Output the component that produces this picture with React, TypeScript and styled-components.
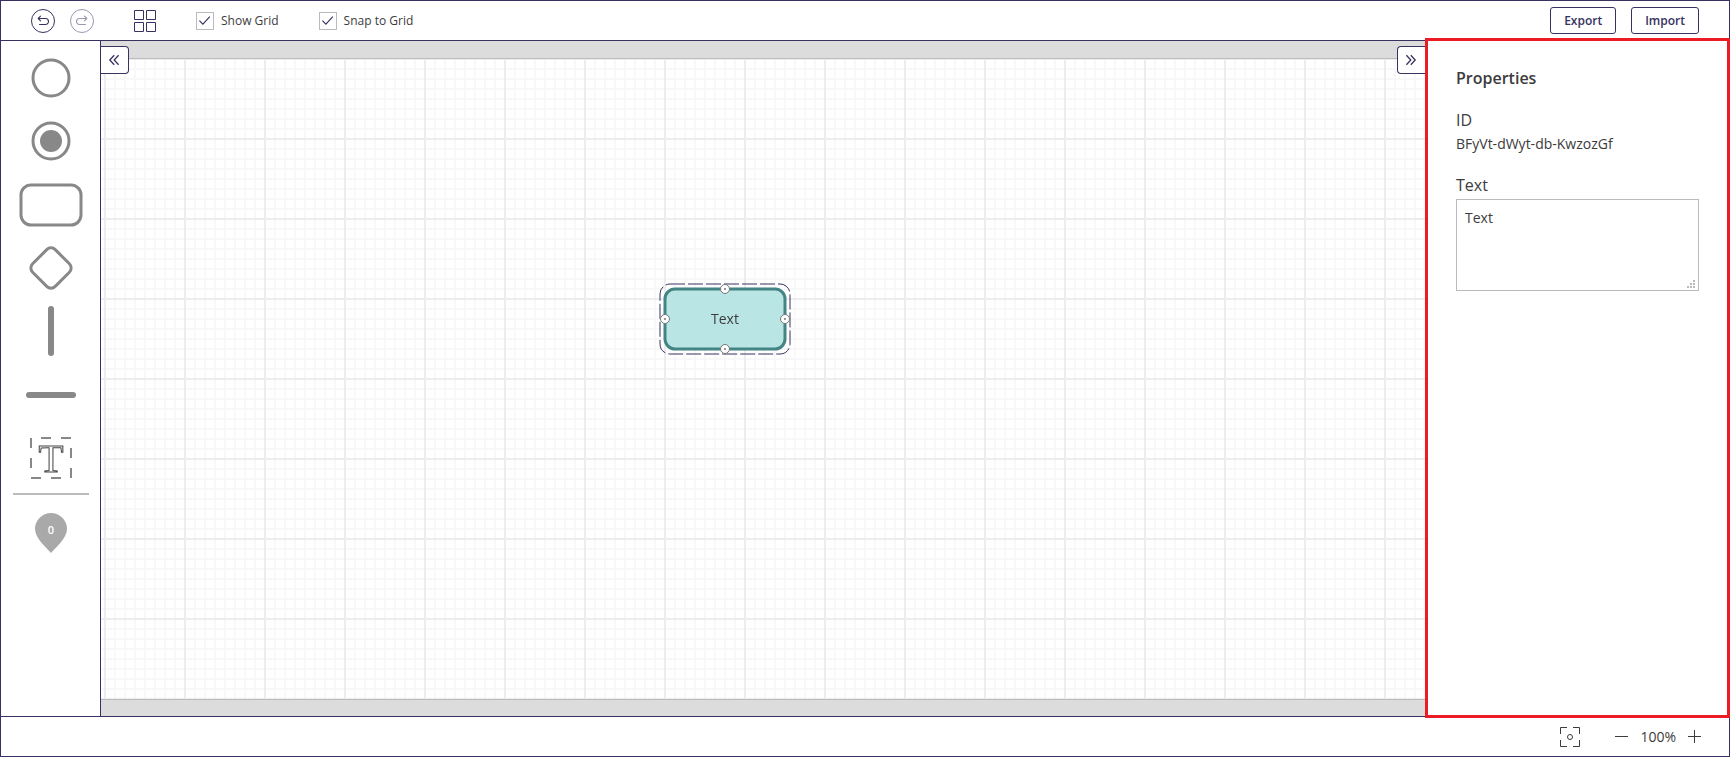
import React, { useState } from "react";
import styled, { createGlobalStyle, css } from "styled-components";

const ink = "#37325f";
const text = "#3c3c3c";
const line = "#bbbbbb";
const shape = "#888888";

const GlobalStyle = createGlobalStyle`
  *, *::before, *::after { box-sizing: border-box; }
  body {
    margin: 0;
    background: #fff;
    color: ${text};
    font-family: "Open Sans", "Noto Sans", sans-serif;
    font-size: 14px;
  }
  button, textarea { font-family: inherit; }
  svg { display: block; overflow: visible; }
`;

const Editor = styled.div`
  display: flex;
  flex-direction: column;
  min-height: 100vh;
  border: 1px solid ${ink};
`;

const Toolbar = styled.header`
  display: flex;
  align-items: center;
  gap: 40px;
  height: 40px;
  padding: 0 30px;
  border-bottom: 1px solid ${ink};
`;

const ButtonGroup = styled.div<{ $end?: boolean }>`
  display: flex;
  gap: 15px;
  ${(p) => p.$end && css`margin-left: auto;`}
`;

const IconButton = styled.button`
  display: flex;
  padding: 0;
  border: 0;
  background: none;
  color: ${ink};
  cursor: pointer;

  &:disabled {
    opacity: 0.5;
    cursor: default;
  }
`;

const ActionButton = styled.button`
  height: 27px;
  padding: 0 13px;
  border: 1px solid ${ink};
  border-radius: 3px;
  background: #fff;
  color: ${ink};
  font-size: 12px;
  font-weight: 600;
  line-height: 24px;
  cursor: pointer;
`;

const CheckLabel = styled.label`
  display: flex;
  align-items: center;
  gap: 7px;
  font-size: 12px;
  line-height: 18px;
  cursor: pointer;
`;

const CheckBox = styled.span`
  display: grid;
  width: 18px;
  height: 18px;

  > * { grid-area: 1 / 1; }
  svg { pointer-events: none; }
  input:not(:checked) + svg { visibility: hidden; }
`;

const CheckInput = styled.input`
  appearance: none;
  width: 18px;
  height: 18px;
  margin: 0;
  border: 1px solid ${line};
  background: #fff;
`;

const Workspace = styled.div`
  display: flex;
  flex: 1;
`;

const Palette = styled.aside`
  width: 100px;
  padding-top: 5px;
  border-right: 1px solid ${ink};
`;

const ShapeList = styled.div`
  display: grid;
  grid-auto-rows: 1fr;
  height: 444px;
`;

const ShapeButton = styled.button`
  display: flex;
  align-items: center;
  justify-content: center;
  width: 100%;
  padding: 0;
  border: 0;
  background: none;
  cursor: grab;
`;

const Divider = styled.hr`
  height: 2px;
  margin: 3px 11px 18px 12px;
  border: 0;
  background: ${line};
`;

const CanvasArea = styled.main`
  position: relative;
  display: flex;
  flex: 1;
  min-width: 0;
  padding: 17px 0 16px;
  background: #dcdcdc;
`;

const Page = styled.div<{ $grid: boolean }>`
  flex: 1;
  border-top: 1px solid ${line};
  border-bottom: 1px solid ${line};
  background-color: #fff;
  ${(p) =>
    p.$grid &&
    css`
      background-image:
        linear-gradient(90deg, #ededed 2px, transparent 2px),
        linear-gradient(#ededed 2px, transparent 2px),
        linear-gradient(90deg, #f8f8f8 2px, transparent 2px),
        linear-gradient(#f8f8f8 2px, transparent 2px);
      background-size: 80px 80px, 80px 80px, 10px 10px, 10px 10px;
      background-position: 3px -1px, 3px -1px, 3px -1px, 3px -1px;
    `}
`;

const PanelToggle = styled.button<{ $side: "left" | "right" }>`
  position: absolute;
  top: 5px;
  ${(p) => p.$side}: 0;
  display: flex;
  align-items: center;
  justify-content: center;
  width: 28px;
  height: 28px;
  padding: 0 1px 0 0;
  border: 1px solid ${ink};
  border-${(p) => p.$side}: 0;
  border-radius: ${(p) => (p.$side === "left" ? "0 4px 4px 0" : "4px 0 0 4px")};
  background: #fff;
  color: ${ink};
  cursor: pointer;
`;

const DiagramNode = styled.svg`
  position: absolute;
  left: 558px;
  top: 242px;
  font-size: 14px;
  will-change: transform;
`;

const Properties = styled.aside`
  position: relative;
  width: 304px;
  padding: 25px 30px 0 31px;

  &::after {
    content: "";
    position: absolute;
    inset: -3px -1px -2px 0;
    border: 3px solid #ed1c24;
    pointer-events: none;
  }
`;

const PanelTitle = styled.h2`
  margin: 0 0 18px;
  font-size: 16px;
  font-weight: 600;
  line-height: 24px;
`;

const FieldName = styled.label`
  display: block;
  font-size: 16px;
  line-height: 24px;
`;

const IdValue = styled.output`
  display: block;
  margin-bottom: 17px;
  line-height: 24px;
`;

const TextField = styled.div`
  position: relative;
  margin-top: 2px;
`;

const TextArea = styled.textarea`
  display: block;
  width: 100%;
  height: 92px;
  padding: 8px;
  border: 1px solid ${line};
  outline: 0;
  background: #fff;
  color: ${text};
  font-size: 14px;
  line-height: 20px;
  resize: none;
`;

const ResizeGrip = styled.svg`
  position: absolute;
  right: 4px;
  bottom: 3px;
  pointer-events: none;
`;

const StatusBar = styled.footer`
  display: flex;
  align-items: center;
  justify-content: flex-end;
  height: 40px;
  padding-right: 28px;
  border-top: 1px solid ${ink};
`;

const ZoomControls = styled.div`
  display: flex;
  align-items: center;
  gap: 12px;
  margin-left: 35px;
  line-height: 20px;

  button { color: ${text}; }
`;

const OutlinedLetter = styled.text`
  font-family: "Liberation Serif", serif;
  font-size: 41px;
  fill: #fff;
  stroke: #444;
  stroke-width: 1px;
`;

const ShapeIcon = styled.svg`
  fill: none;
  stroke: ${shape};
  stroke-width: 3px;
  will-change: transform;
`;

const Arrow = ({ flip }: { flip?: boolean }) => (
  <svg width="24" height="24" viewBox="0 0 24 24" fill="none" stroke="currentColor">
    <circle cx="12" cy="12" r="11.5" />
    <g transform={flip ? "matrix(-1 0 0 1 24 0)" : undefined} strokeWidth="1.1" strokeLinecap="round" strokeLinejoin="round">
      <path d="M9.5 7.2 7.2 9.5l2.3 2.3M7.2 9.5h7.300a3 3 0 0 1 0 6H8.500" />
    </g>
  </svg>
);

const Chevrons = ({ flip }: { flip?: boolean }) => (
  <svg width="10" height="10" viewBox="0 0 10 10" fill="none" stroke="currentColor" strokeWidth="1.3">
    <path transform={flip ? "matrix(-1 0 0 1 10 0)" : undefined} d="M5.2.2.8 5l4.400 4.800M9.600.2 5.200 5l4.400 4.800" />
  </svg>
);

function CheckField(props: { label: string; checked: boolean; onChange: (v: boolean) => void }) {
  return (
    <CheckLabel>
      <CheckBox>
        <CheckInput type="checkbox" checked={props.checked} onChange={(e) => props.onChange(e.target.checked)} />
        <svg width="18" height="18" viewBox="0 0 18 18" fill="none" stroke={ink} strokeWidth="1.1">
          <path d="m3.400 8.600 3.500 3.600L13.800 4.600" />
        </svg>
      </CheckBox>
      {props.label}
    </CheckLabel>
  );
}

const shapes: { name: string; width: number; height: number; drawing: React.ReactNode }[] = [
  { name: "Circle", width: 40, height: 40, drawing: <circle cx="20" cy="20" r="18" /> },
  {
    name: "Final state",
    width: 40,
    height: 40,
    drawing: (
      <>
        <circle cx="20" cy="20" r="18" />
        <circle cx="20" cy="20" r="11" fill={shape} stroke="none" />
      </>
    ),
  },
  { name: "Activity", width: 64, height: 44, drawing: <rect x="2" y="2" width="60" height="40" rx="10" /> },
  {
    name: "Decision",
    width: 44,
    height: 44,
    drawing: <rect x="6" y="6" width="32" height="32" rx="6" transform="rotate(45 22 22)" />,
  },
  { name: "Vertical bar", width: 6, height: 50, drawing: <rect width="6" height="50" rx="3" fill={shape} stroke="none" /> },
  { name: "Horizontal bar", width: 50, height: 6, drawing: <rect width="50" height="6" rx="3" fill={shape} stroke="none" /> },
  {
    name: "Text block",
    width: 42,
    height: 42,
    drawing: (
      <>
        <path d="M1 1V41M1 41H41M41 41V1M41 1H1" strokeWidth="2" strokeDasharray="10" />
        <OutlinedLetter x="21" y="35" textAnchor="middle">T</OutlinedLetter>
      </>
    ),
  },
];

const handles = [
  [66, 6],
  [126, 36],
  [66, 66],
  [6, 36],
];

export default function App() {
  const [showGrid, setShowGrid] = useState(true);
  const [snap, setSnap] = useState(true);
  const [label, setLabel] = useState("Text");

  return (
    <Editor>
      <GlobalStyle />
      <Toolbar>
        <ButtonGroup>
          <IconButton aria-label="Undo"><Arrow /></IconButton>
          <IconButton aria-label="Redo" disabled><Arrow flip /></IconButton>
        </ButtonGroup>
        <IconButton aria-label="Arrange">
          <svg width="22" height="22" viewBox="0 0 22 22" fill="none" stroke="currentColor">
            <path d="M.5.5h9v9h-9zM12.500.5h9v9h-9zM.5 12.500h9v9h-9zM12.500 12.500h9v9h-9z" />
          </svg>
        </IconButton>
        <CheckField label="Show Grid" checked={showGrid} onChange={setShowGrid} />
        <CheckField label="Snap to Grid" checked={snap} onChange={setSnap} />
        <ButtonGroup $end>
          <ActionButton>Export</ActionButton>
          <ActionButton>Import</ActionButton>
        </ButtonGroup>
      </Toolbar>

      <Workspace>
        <Palette>
          <ShapeList>
            {shapes.map((s) => (
              <ShapeButton key={s.name} aria-label={s.name}>
                <ShapeIcon width={s.width} height={s.height}>{s.drawing}</ShapeIcon>
              </ShapeButton>
            ))}
          </ShapeList>
          <Divider />
          <ShapeButton aria-label="Pin">
            <svg width="32" height="40" viewBox="0 0 32 40">
              <path d="M16 40C12 35 0 25.500 0 16a16 16 0 0 1 32 0c0 9.500-12 19-16 24z" fill="#a9a9a9" />
              <text x="16" y="21" textAnchor="middle" fontSize="11" fontWeight="600" fill="#fff">0</text>
            </svg>
          </ShapeButton>
        </Palette>

        <CanvasArea>
          <Page $grid={showGrid} />
          <DiagramNode width="132" height="72" viewBox="0 0 132 72">
            <rect x="1" y="1" width="130" height="70" rx="10" fill="none" stroke={ink} strokeDasharray="15 3" />
            <rect x="6" y="6" width="120" height="60" rx="10" fill="#bae5e5" stroke="#438484" strokeWidth="3" />
            <text x="66" y="41" textAnchor="middle" fill={text}>{label}</text>
            {handles.map(([x, y]) => (
              <g key={`${x}-${y}`}>
                <circle cx={x} cy={y} r="4.500" fill="#fff" stroke="#777" />
                <circle cx={x} cy={y} r="1" fill="#777" />
              </g>
            ))}
          </DiagramNode>
          <PanelToggle $side="left" aria-label="Collapse palette"><Chevrons /></PanelToggle>
          <PanelToggle $side="right" aria-label="Collapse properties"><Chevrons flip /></PanelToggle>
        </CanvasArea>

        <Properties>
          <PanelTitle>Properties</PanelTitle>
          <FieldName htmlFor="node-id">ID</FieldName>
          <IdValue id="node-id">BFyVt-dWyt-db-KwzozGf</IdValue>
          <FieldName htmlFor="node-text">Text</FieldName>
          <TextField>
            <TextArea id="node-text" value={label} onChange={(e) => setLabel(e.target.value)} />
            <ResizeGrip width="8" height="8" fill={line}>
              <path d="M6 0h2v2H6zM3 3h2v2H3zM6 3h2v2H6zM0 6h2v2H0zM3 6h2v2H3zM6 6h2v2H6z" />
            </ResizeGrip>
          </TextField>
        </Properties>
      </Workspace>

      <StatusBar>
        <IconButton aria-label="Fit to screen">
          <svg width="20" height="20" viewBox="0 0 20 20" fill="none" stroke={text}>
            <path d="M.5 7V.5H7M13 .5h6.500V7M19.500 13v6.500H13M7 19.500H.5V13" />
            <circle cx="10" cy="10" r="2.500" />
          </svg>
        </IconButton>
        <ZoomControls>
          <IconButton aria-label="Zoom out">
            <svg width="13" height="13" stroke="currentColor"><path d="M0 6.500h13" /></svg>
          </IconButton>
          <span>100%</span>
          <IconButton aria-label="Zoom in">
            <svg width="13" height="13" stroke="currentColor"><path d="M0 6.500h13M6.500 0v13" /></svg>
          </IconButton>
        </ZoomControls>
      </StatusBar>
    </Editor>
  );
}
